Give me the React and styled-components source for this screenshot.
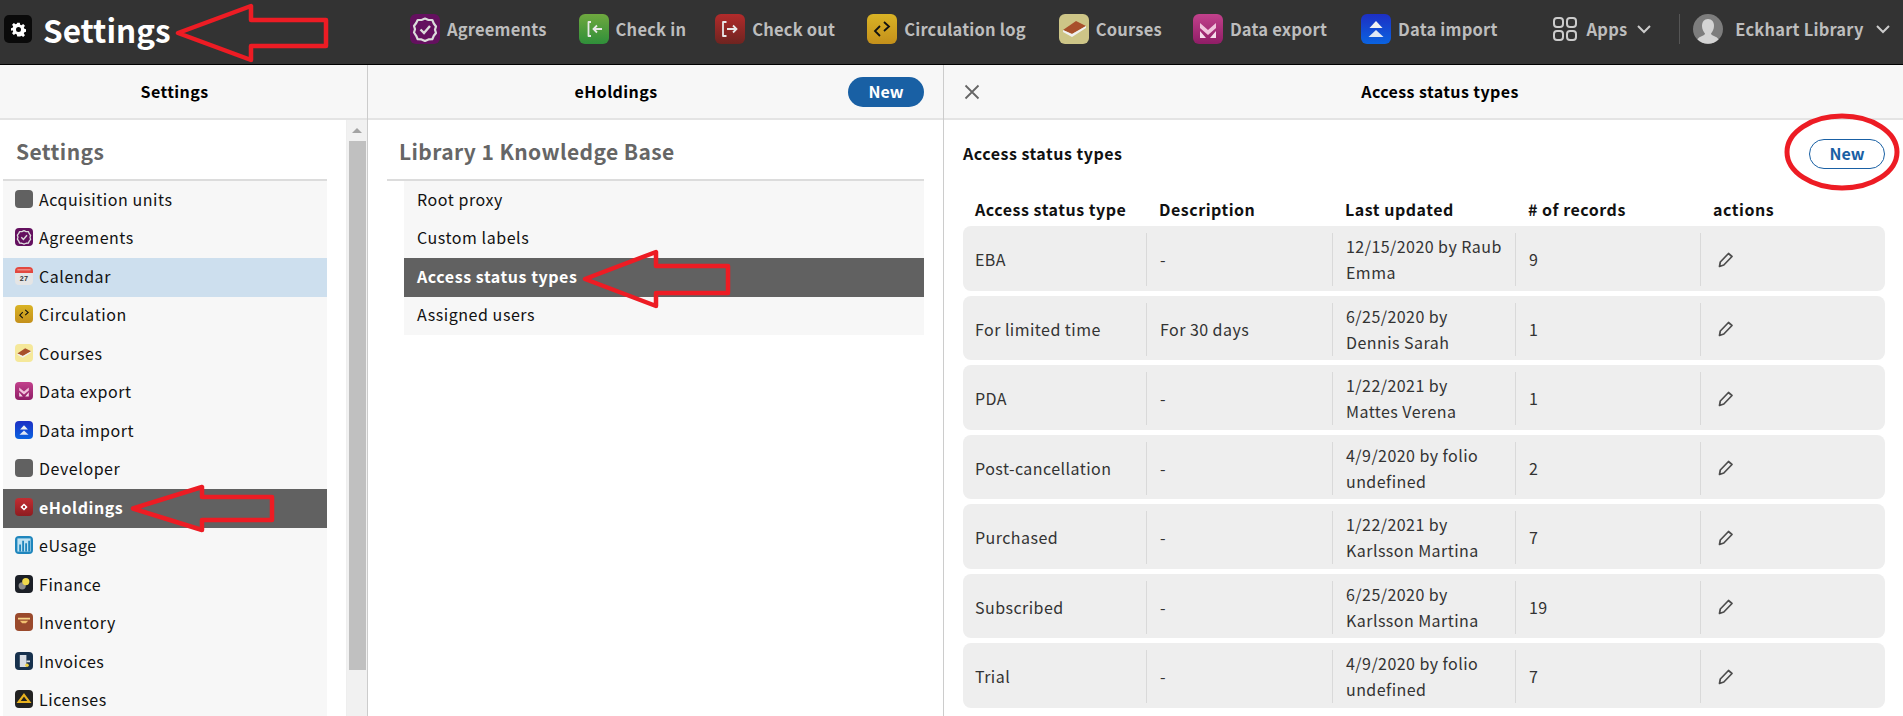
import React from 'react';
import styled, { createGlobalStyle } from 'styled-components';

const font = '"Noto Sans CJK SC", "Source Sans Pro", "Noto Sans", sans-serif';

const Global = createGlobalStyle`
  html, body { margin: 0; padding: 0; height: 716px; overflow: hidden; background: #fff; }
  * { box-sizing: border-box; }
  body { font-family: ${font}; color: #000; }
`;

const Page = styled.div`
  position: relative;
  width: 1903px;
  height: 716px;
  overflow: hidden;
  display: flex;
  flex-direction: column;
`;

const TopBar = styled.header`
  height: 65px;
  flex: none;
  background: #333;
  border-bottom: 1px solid #000;
  display: flex;
  align-items: center;
  padding: 0 0 6px 4px;
`;

const AppIcon = styled.div`
  width: 28px;
  height: 28px;
  flex: none;
  border-radius: 5px;
  background: #0a0a0a;
  display: flex;
  align-items: center;
  justify-content: center;
`;

const AppTitle = styled.div`
  margin-left: 11px;
  width: 367px;
  flex: none;
  font-size: 31.5px;
  line-height: 40px;
  font-weight: 700;
  color: #fff;
`;

const NavItem = styled.div`
  display: flex;
  align-items: center;
  gap: ${p => p.$spacing || 7}px;
  margin-right: ${p => p.$gap ?? 33}px;
  font-size: 16.5px;
  font-weight: 700;
  letter-spacing: 0.2px;
  color: #bdbdbd;
  white-space: nowrap;
`;

const NavIconBox = styled.div`
  width: 30px;
  height: 30px;
  border-radius: 6px;
  overflow: hidden;
  flex: none;
`;

const BarDivider = styled.div`
  width: 1px;
  height: 30px;
  background: #555;
  margin: 0 13px 0 28px;
`;

const Panes = styled.div`
  flex: 1;
  display: flex;
  min-height: 0;
`;

const Pane = styled.section`
  width: ${p => p.$width}px;
  flex: ${p => (p.$width ? 'none' : 1)};
  border-right: ${p => (p.$last ? 'none' : '1px solid #ccc')};
  display: flex;
  flex-direction: column;
  min-width: 0;
`;

const PaneHeader = styled.div`
  height: 55px;
  flex: none;
  background: #f7f7f7;
  border-bottom: 2px solid #e4e4e4;
  display: flex;
  align-items: center;
  padding: ${p => p.$padding || '0'};
`;

const PaneTitle = styled.div`
  flex: 1;
  text-align: center;
  font-size: 16px;
  font-weight: 700;
  letter-spacing: 0.4px;
  padding-bottom: 1px;
`;

const CloseButton = styled.div`
  width: 16px;
  height: 16px;
  flex: none;
  color: #666;
  display: flex;
`;

const PrimaryButton = styled.div`
  width: 76px;
  height: 30px;
  flex: none;
  border-radius: 15px;
  background: #1960a4;
  color: #fff;
  font-size: 16px;
  font-weight: 700;
  display: flex;
  align-items: center;
  justify-content: center;
  padding-bottom: 2px;
`;

const OutlineButton = styled(PrimaryButton)`
  background: #fff;
  border: 1px solid #1960a4;
  color: #1960a4;
`;

const PaneBody = styled.div`
  flex: 1;
  display: flex;
  min-height: 0;
  overflow: hidden;
`;

const Column = styled.div`
  flex: 1;
  min-width: 0;
  padding: ${p => p.$padding};
`;

const NavHeading = styled.h2`
  margin: 0;
  height: 60px;
  padding-left: ${p => p.$indent}px;
  font-size: 21px;
  line-height: 62px;
  font-weight: 700;
  letter-spacing: 0.4px;
  color: #666;
`;

const NavList = styled.div`
  border-top: 2px solid #dcdcdc;
  margin-top: -1px;
`;

const SubList = styled.div`
  margin-left: 17px;
  background: #f7f7f7;
`;

const Row = styled.div`
  height: 38.5px;
  display: flex;
  align-items: center;
  gap: 6px;
  padding-left: ${p => p.$indent}px;
  padding-bottom: 3px;
  font-size: 16px;
  letter-spacing: 0.55px;
  font-weight: ${p => (p.$selected ? 700 : 400)};
  color: ${p => (p.$selected ? '#fff' : '#111')};
  background: ${p => (p.$selected ? '#616161' : p.$hover ? '#cddfee' : '#f7f7f7')};
`;

const RowIcon = styled.div`
  width: 18px;
  height: 18px;
  border-radius: 4px;
  overflow: hidden;
  flex: none;
  background: ${p => p.$bg};
`;

const Scrollbar = styled.div`
  width: 21px;
  flex: none;
  background: #f1f1f1;
  display: flex;
  flex-direction: column;
  align-items: center;
  border-left: 1px solid #eee;
`;

const ScrollArrow = styled.div`
  width: 0;
  height: 0;
  margin-top: 8px;
  border-left: 5px solid transparent;
  border-right: 5px solid transparent;
  border-bottom: 5px solid #a3a3a3;
`;

const ScrollThumb = styled.div`
  width: 17px;
  height: 529px;
  margin-top: 8px;
  background: #c0c0c0;
`;

const DetailBody = styled.div`
  flex: 1;
  padding: 19px 18px 0 19px;
`;

const DetailHead = styled.div`
  display: flex;
  align-items: center;
  justify-content: space-between;
  height: 30px;
`;

const DetailTitle = styled.div`
  padding-bottom: 3px;
  font-size: 16px;
  font-weight: 700;
  letter-spacing: 0.5px;
  color: #111;
`;

const TableGrid = `
  display: grid;
  grid-template-columns: 183px 186px 183px 185px 1fr;
`;

const TableHead = styled.div`
  ${TableGrid}
  margin-top: 26px;
  height: 31px;
  padding-bottom: 3px;
  align-items: center;
  font-size: 16px;
  font-weight: 700;
  letter-spacing: 0.52px;
  color: #111;
`;

const HeadCell = styled.div`
  padding-left: ${p => (p.$first ? 12 : 13)}px;
`;

const TableRow = styled.div`
  ${TableGrid}
  height: 64.5px;
  margin-bottom: 5px;
  padding: 7px 0 6px;
  border-radius: 8px;
  background: #eee;
  font-size: 16px;
  line-height: 26px;
  letter-spacing: 0.45px;
  color: #333;
`;

const Cell = styled.div`
  padding-left: ${p => (p.$first ? 12 : 13)}px;
  padding-bottom: 1px;
  display: flex;
  flex-direction: column;
  justify-content: center;
  border-left: ${p => (p.$first ? 'none' : '1px solid #d9d9d9')};
  white-space: nowrap;
`;

const ActionCell = styled(Cell)`
  padding-left: 17px;
  padding-bottom: 0;
`;

const Overlay = styled.svg`
  position: absolute;
  left: 0;
  top: 0;
  pointer-events: none;
`;

const Box = ({ children }) => (
  <svg width="100%" height="100%" viewBox="0 0 30 30" style={{ display: 'block' }}>{children}</svg>
);

const gear = (
  <svg width="15" height="15" viewBox="0 0 24 24">
    <path fill="#fff" fillRule="evenodd" d="M10 1h4l.7 3.200 2 .9 2.800-1.800 2.800 2.800-1.800 2.800.9 2 3.200.7v4l-3.200.7-.9 2 1.800 2.800-2.800 2.800-2.800-1.800-2 .9L14 23h-4l-.7-3.200-2-.9-2.800 1.800-2.800-2.800 1.800-2.800-.9-2L-.6 14v-4l3.200-.7.9-2L1.700 4.500l2.800-2.800 2.800 1.800 2-.9zM12 8a4 4 0 1 0 0 8 4 4 0 0 0 0-8z" />
  </svg>
);

const Agreements = () => (
  <Box>
    <rect width="30" height="30" fill="#64105f" />
    <path d="M15 4.500l3.500 1.500 3.800 0 1.500 3.500 2.200 3-1 3.200 1 3.300-2.200 2.800-1.500 3.400-3.800.2-3.500 1.600-3.500-1.600-3.800-.2-1.500-3.400L4 18.500l1-3.300-1-3.200 2.200-3L7.700 6l3.800 0z" fill="none" stroke="#dcdcdc" strokeWidth="2.200" strokeLinejoin="round" />
    <path d="M10.500 15.500l3.500 3.500 6-7" fill="none" stroke="#dcdcdc" strokeWidth="2.400" />
  </Box>
);

const CheckIn = () => (
  <Box>
    <defs><linearGradient id="ci" x1="0" y1="0" x2="0" y2="1"><stop offset="0" stopColor="#6fa83f" /><stop offset="1" stopColor="#2f8f3a" /></linearGradient></defs>
    <rect width="30" height="30" fill="url(#ci)" />
    <path d="M12 8H9.500v14H12" fill="none" stroke="#e8e8e8" strokeWidth="1.800" strokeLinejoin="round" />
    <path d="M23 15h-8M18 11.500l-3.500 3.500 3.500 3.500" fill="none" stroke="#e8e8e8" strokeWidth="1.800" />
  </Box>
);

const CheckOut = () => (
  <Box>
    <defs><linearGradient id="co" x1="0" y1="0" x2="0" y2="1"><stop offset="0" stopColor="#b22b2b" /><stop offset="1" stopColor="#6e2420" /></linearGradient></defs>
    <rect width="30" height="30" fill="url(#co)" />
    <path d="M11.500 8H8v14h3.500" fill="none" stroke="#e8e8e8" strokeWidth="1.800" strokeLinejoin="round" />
    <path d="M12 15h9.500M18 11.500l3.500 3.500-3.500 3.500" fill="none" stroke="#e8e8e8" strokeWidth="1.800" />
  </Box>
);

const Circulation = () => (
  <Box>
    <defs><linearGradient id="cl" x1="0" y1="0" x2="0" y2="1"><stop offset="0" stopColor="#d9b325" /><stop offset="1" stopColor="#c4901b" /></linearGradient></defs>
    <rect width="30" height="30" fill="url(#cl)" />
    <path d="M13 12l-5 5 5 5M17 8l5 4.500-5 4.500" fill="none" stroke="#111" strokeWidth="1.800" />
  </Box>
);

const Courses = ({ light }) => (
  <Box>
    <rect width="30" height="30" fill={light ? '#f5e89a' : '#cdc587'} />
    <path d="M4 16l13-9 10 5-14 8z" fill="#a8502c" />
    <path d="M4 16l9 4 14-8v2L13 23l-9-5z" fill="#f0f0f0" />
  </Box>
);

const DataExport = () => (
  <Box>
    <defs><linearGradient id="de" x1="0" y1="0" x2="0" y2="1"><stop offset="0" stopColor="#c2418c" /><stop offset="1" stopColor="#8f1d66" /></linearGradient></defs>
    <rect width="30" height="30" fill="url(#de)" />
    <path d="M7 9l8 7 8-7v5l-8 7-8-7z" fill="#f0c4dc" />
    <path d="M7 17l6 7H7zM23 17l-6 7h6z" fill="#f5dcea" />
  </Box>
);

const DataImport = () => (
  <Box>
    <defs><linearGradient id="di" x1="0" y1="0" x2="0" y2="1"><stop offset="0" stopColor="#1d2fc4" /><stop offset="1" stopColor="#0a63e0" /></linearGradient></defs>
    <rect width="30" height="30" fill="url(#di)" />
    <path d="M15 7l6.500 7h-13z" fill="#f2f2f2" />
    <path d="M15 16l7.500 7h-15z" fill="#dfe8f5" />
  </Box>
);

const CalendarIcon = () => (
  <Box>
    <rect width="30" height="30" fill="#e5e5e5" />
    <rect width="30" height="10" fill="#e2483f" />
    <rect x="4" y="4" width="22" height="1.500" fill="#f5b5b0" />
    <text x="15" y="24" fontSize="12" fontWeight="700" textAnchor="middle" fill="#333" fontFamily="Liberation Sans, sans-serif">27</text>
  </Box>
);

const EHoldings = () => (
  <Box>
    <defs><linearGradient id="eh" x1="0" y1="0" x2="0" y2="1"><stop offset="0" stopColor="#c22d32" /><stop offset="1" stopColor="#8e1c20" /></linearGradient></defs>
    <rect width="30" height="30" fill="url(#eh)" />
    <path d="M15 9l6 6-6 6-6-6z" fill="#fff" />
    <circle cx="15" cy="15" r="2" fill="#b0262a" />
  </Box>
);

const EUsage = () => (
  <Box>
    <rect width="30" height="30" fill="#1f86bd" />
    <rect x="4" y="4" width="22" height="22" fill="#bfe2f2" />
    <path d="M7 26V14h3v12zM12 26V8h3v18zM17 26V12h3v14zM22 26V8h3v18z" fill="#1f86bd" />
  </Box>
);

const FinanceIcon = () => (
  <Box>
    <rect width="30" height="30" fill="#1b1f26" />
    <circle cx="12" cy="18" r="6" fill="#8c8c8c" />
    <circle cx="18" cy="11" r="6" fill="#f1d94b" />
  </Box>
);

const InventoryIcon = () => (
  <Box>
    <rect width="30" height="30" fill="#9a4a2d" />
    <path d="M5 8h20v3H5z" fill="#f6d488" />
    <path d="M8 13h14l-4 4h-6z" fill="#f0c070" />
  </Box>
);

const InvoicesIcon = () => (
  <Box>
    <rect width="30" height="30" fill="#17314d" />
    <path d="M8 5h11v20H8z" fill="#d8dde3" />
    <path d="M19 14h6v3h-6z" fill="#d8dde3" />
    <circle cx="20" cy="22" r="3" fill="#f0d040" />
  </Box>
);

const LicensesIcon = () => (
  <Box>
    <rect width="30" height="30" fill="#222" />
    <path d="M15 8l9 12H6z" fill="none" stroke="#e8b21f" strokeWidth="3.500" />
  </Box>
);

const AppsGrid = () => (
  <svg width="24" height="24" viewBox="0 0 24 24" fill="none" stroke="#ccc" strokeWidth="2">
    <rect x="1" y="1" width="9" height="9" rx="3" />
    <rect x="14" y="1" width="9" height="9" rx="3" />
    <rect x="1" y="14" width="9" height="9" rx="3" />
    <rect x="14" y="14" width="9" height="9" rx="3" />
  </svg>
);

const Chevron = () => (
  <svg width="14" height="9" viewBox="0 0 14 9" fill="none" stroke="#ccc" strokeWidth="2">
    <path d="M1 1l6 6 6-6" />
  </svg>
);

const Avatar = () => (
  <svg width="30" height="30" viewBox="0 0 30 30">
    <circle cx="15" cy="15" r="15" fill="#7d7d7d" />
    <path d="M15 5c4 0 6 3 6 7 0 3-1.500 6-3 7.500 0 1.500 2 2 5 3.500 1.500.8 2 1.500 2.500 2.500A15 15 0 0 1 4.500 25.500c.5-1 1-1.700 2.500-2.500 3-1.500 5-2 5-3.500C10.500 18 9 15 9 12c0-4 2-7 6-7z" fill="#d4d4d4" />
  </svg>
);

const Pencil = () => (
  <svg width="16" height="16" viewBox="0 0 16 16" fill="none" stroke="#4d4d4d" strokeWidth="1.700">
    <path d="M1.500 14.500l.8-4.500 8.200-8.500 3.500 3-8.200 8.500z" strokeLinejoin="round" />
  </svg>
);

const Arrow = ({ tip, headX, headTop, shaftTop, right, shaftBottom, headBottom }) => (
  <polygon
    points={`${tip},${(headTop + headBottom) / 2} ${headX},${headTop} ${headX},${shaftTop} ${right},${shaftTop} ${right},${shaftBottom} ${headX},${shaftBottom} ${headX},${headBottom}`}
    fill="none"
    stroke="#ed1c24"
    strokeWidth="4.500"
    strokeLinejoin="round"
  />
);

const navItems = [
  { label: 'Agreements', Icon: Agreements, gap: 32 },
  { label: 'Check in', Icon: CheckIn, gap: 29 },
  { label: 'Check out', Icon: CheckOut, gap: 32 },
  { label: 'Circulation log', Icon: Circulation, gap: 33 },
  { label: 'Courses', Icon: Courses, gap: 31 },
  { label: 'Data export', Icon: DataExport, gap: 34 },
  { label: 'Data import', Icon: DataImport, gap: 55 },
];

const settingsRows = [
  { label: 'Acquisition units', bg: '#616161' },
  { label: 'Agreements', Icon: Agreements },
  { label: 'Calendar', Icon: CalendarIcon, hover: true },
  { label: 'Circulation', Icon: Circulation },
  { label: 'Courses', Icon: () => <Courses light /> },
  { label: 'Data export', Icon: DataExport },
  { label: 'Data import', Icon: DataImport },
  { label: 'Developer', bg: '#616161' },
  { label: 'eHoldings', Icon: EHoldings, selected: true },
  { label: 'eUsage', Icon: EUsage },
  { label: 'Finance', Icon: FinanceIcon },
  { label: 'Inventory', Icon: InventoryIcon },
  { label: 'Invoices', Icon: InvoicesIcon },
  { label: 'Licenses', Icon: LicensesIcon },
];

const eholdingsRows = ['Root proxy', 'Custom labels', 'Access status types', 'Assigned users'];

const statusRows = [
  ['EBA', '-', ['12/15/2020 by Raub', 'Emma'], '9'],
  ['For limited time', 'For 30 days', ['6/25/2020 by', 'Dennis Sarah'], '1'],
  ['PDA', '-', ['1/22/2021 by', 'Mattes Verena'], '1'],
  ['Post-cancellation', '-', ['4/9/2020 by folio', 'undefined'], '2'],
  ['Purchased', '-', ['1/22/2021 by', 'Karlsson Martina'], '7'],
  ['Subscribed', '-', ['6/25/2020 by', 'Karlsson Martina'], '19'],
  ['Trial', '-', ['4/9/2020 by folio', 'undefined'], '7'],
];

export default function App() {
  return (
    <Page>
      <Global />
      <TopBar>
        <AppIcon>{gear}</AppIcon>
        <AppTitle>Settings</AppTitle>
        {navItems.map(({ label, Icon, gap }) => (
          <NavItem key={label} $gap={gap}>
            <NavIconBox><Icon /></NavIconBox>
            {label}
          </NavItem>
        ))}
        <NavItem $gap={0} $spacing={10}>
          <AppsGrid />
          Apps
          <Chevron />
        </NavItem>
        <BarDivider />
        <NavItem $gap={0} $spacing={12}>
          <Avatar />
          Eckhart Library
          <Chevron />
        </NavItem>
      </TopBar>

      <Panes>
        <Pane $width={368}>
          <PaneHeader $padding="0 18px 0 0"><PaneTitle>Settings</PaneTitle></PaneHeader>
          <PaneBody>
            <Column $padding="0 19px 0 3px">
              <NavHeading $indent={13}>Settings</NavHeading>
              <NavList>
                {settingsRows.map(({ label, Icon, bg, hover, selected }) => (
                  <Row key={label} $indent={12} $hover={hover} $selected={selected}>
                    <RowIcon $bg={bg}>{Icon && <Icon />}</RowIcon>
                    {label}
                  </Row>
                ))}
              </NavList>
            </Column>
            <Scrollbar>
              <ScrollArrow />
              <ScrollThumb />
            </Scrollbar>
          </PaneBody>
        </Pane>

        <Pane $width={576}>
          <PaneHeader $padding="0 19px 0 16px">
            <PaneTitle>eHoldings</PaneTitle>
            <PrimaryButton>New</PrimaryButton>
          </PaneHeader>
          <PaneBody>
            <Column $padding="0 19px">
              <NavHeading $indent={12}>Library 1 Knowledge Base</NavHeading>
              <NavList>
                <SubList>
                  {eholdingsRows.map(label => (
                    <Row key={label} $indent={13} $selected={label === 'Access status types'}>{label}</Row>
                  ))}
                </SubList>
              </NavList>
            </Column>
          </PaneBody>
        </Pane>

        <Pane $last>
          <PaneHeader $padding="0 3px 0 20px">
            <CloseButton>
              <svg width="16" height="16" viewBox="0 0 16 16" fill="none" stroke="currentColor" strokeWidth="1.800">
                <path d="M1.500 1.500l13 13M14.500 1.500l-13 13" />
              </svg>
            </CloseButton>
            <PaneTitle>Access status types</PaneTitle>
          </PaneHeader>
          <DetailBody>
            <DetailHead>
              <DetailTitle>Access status types</DetailTitle>
              <OutlineButton>New</OutlineButton>
            </DetailHead>
            <TableHead>
              <HeadCell $first>Access status type</HeadCell>
              <HeadCell>Description</HeadCell>
              <HeadCell>Last updated</HeadCell>
              <HeadCell># of records</HeadCell>
              <HeadCell>actions</HeadCell>
            </TableHead>
            {statusRows.map(([type, desc, updated, count]) => (
              <TableRow key={type}>
                <Cell $first>{type}</Cell>
                <Cell>{desc}</Cell>
                <Cell>{updated.map(line => <div key={line}>{line}</div>)}</Cell>
                <Cell>{count}</Cell>
                <ActionCell><Pencil /></ActionCell>
              </TableRow>
            ))}
          </DetailBody>
        </Pane>
      </Panes>

      <Overlay width="1903" height="716">
        <Arrow tip={178} headX={251} headTop={6} shaftTop={20} right={326} shaftBottom={46} headBottom={60} />
        <Arrow tip={133} headX={202} headTop={487} shaftTop={497} right={272} shaftBottom={520} headBottom={530} />
        <Arrow tip={585} headX={656} headTop={252} shaftTop={266} right={728} shaftBottom={293} headBottom={306} />
        <ellipse cx="1842" cy="152" rx="55" ry="36" fill="none" stroke="#ed1c24" strokeWidth="5" />
      </Overlay>
    </Page>
  );
}
